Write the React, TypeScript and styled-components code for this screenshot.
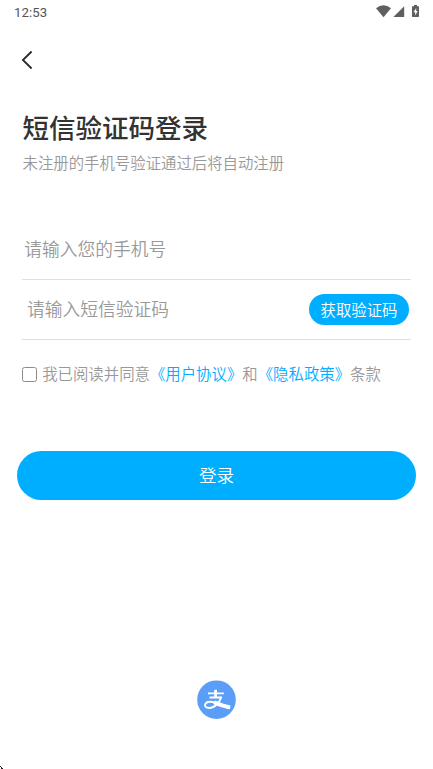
import React from 'react';
import styled, { createGlobalStyle } from 'styled-components';

const GlobalStyle = createGlobalStyle`
  * { box-sizing: border-box; }
  body {
    margin: 0;
    background: #fff;
    font-family: "Noto Sans CJK SC", sans-serif;
    font-weight: 350;
  }
`;

const Screen = styled.main`
  display: flex;
  flex-direction: column;
  height: 769px;
  overflow: hidden;
  background: #fff;
`;

const StatusBar = styled.header`
  display: flex;
  justify-content: space-between;
  height: 24px;
  padding: 0 13px 0 14px;
`;

const Clock = styled.time`
  font: 400 13.2px/25px Roboto, sans-serif;
  color: #555;
  letter-spacing: 0.1px;
`;

const StatusIcons = styled.svg`
  width: 46px;
  height: 24px;
  fill: #5f5f5f;
`;

const NavBar = styled.nav`
  display: flex;
  align-items: center;
  height: 72px;
  padding-left: 20px;
`;

const BackButton = styled.button`
  display: flex;
  padding: 0;
  border: 0;
  background: none;
`;

const Intro = styled.section`
  padding: 11px 22px 0 22.5px;
`;

const Title = styled.h1`
  margin: 0;
  font-size: 26.5px;
  font-weight: 500;
  line-height: 40px;
  color: #333;
`;

const Subtitle = styled.p`
  margin: 0;
  font-size: 15.4px;
  line-height: 30px;
  color: #999;
`;

const Form = styled.form`
  display: flex;
  flex-direction: column;
  margin-top: 43px;
`;

const Field = styled.div<{ $indent: number }>`
  display: flex;
  align-items: center;
  justify-content: space-between;
  height: 60px;
  margin: 0 22px;
  padding: 0 2px 0 ${({ $indent }) => $indent}px;
  border-bottom: 1px solid #dfdfdf;
`;

const Input = styled.input`
  flex: 1;
  min-width: 0;
  height: 40px;
  padding: 0 0 4px;
  border: 0;
  outline: 0;
  background: none;
  font: 350 17.75px/36px "Noto Sans CJK SC", sans-serif;
  color: #333;
  &::placeholder { color: #999; opacity: 1; }
`;

const CodeButton = styled.button`
  width: 100px;
  height: 31px;
  padding: 0 0 1px;
  border: 0;
  border-radius: 16px;
  background: #00aeff;
  color: #fff;
  font: 350 15.4px/30px "Noto Sans CJK SC", sans-serif;
`;

const Agreement = styled.label`
  display: flex;
  align-items: center;
  height: 30px;
  margin: 19px 22px 0;
  font-size: 15.4px;
  line-height: 28px;
  color: #999;
  white-space: nowrap;
`;

const Terms = styled.span`
  padding-bottom: 2px;
`;

const Checkbox = styled.input`
  appearance: none;
  width: 15px;
  height: 15px;
  margin: 0 5.2px 0 0;
  border: 1px solid #8c8c8c;
  border-radius: 2.5px;
  background: #fff;
  &:checked { background: #00aeff; }
`;

const Policy = styled.span`
  color: #00aeff;
`;

const LoginButton = styled.button`
  height: 49px;
  margin: 62px 17px 0;
  padding: 0 0 1px;
  border: 0;
  border-radius: 25px;
  background: #00aeff;
  color: #fff;
  font: 350 17.6px/48px "Noto Sans CJK SC", sans-serif;
`;

const Alternatives = styled.footer`
  display: flex;
  justify-content: center;
  margin-top: auto;
  padding-bottom: 50px;
`;

const CornerMark = styled.svg`
  position: absolute;
  left: 0;
  top: 766px;
`;

export default function App() {
  return (
    <Screen>
      <GlobalStyle />
      <StatusBar>
        <Clock>12:53</Clock>
        <StatusIcons viewBox="0 0 46 24" aria-hidden="true">
          <path d="M2 8.2Q9.5 2.5 17 8.2L9.5 17.3Z" />
          <path d="M30.2 6.2V17H19.4Z" />
          <path
            fillRule="evenodd"
            d="M38.3 6.3H40V5h3v1.3H44.7Q45 6.3 45 7V16.3Q45 17 44.3 17H38.7Q38 17 38 16.3V7Q38 6.3 38.3 6.3ZM42.2 8L39.5 12.3H41.2V15.5L43.7 11.1H42.2Z"
          />
        </StatusIcons>
      </StatusBar>
      <NavBar>
        <BackButton aria-label="返回">
          <svg width="14" height="20" viewBox="0 0 14 20" fill="none" stroke="#292929" strokeWidth="1.8">
            <path d="M11.6 1.5L2.9 10l8.7 8.5" />
          </svg>
        </BackButton>
      </NavBar>
      <Intro>
        <Title>短信验证码登录</Title>
        <Subtitle>未注册的手机号验证通过后将自动注册</Subtitle>
      </Intro>
      <Form>
        <Field $indent={2.2}>
          <Input type="tel" placeholder="请输入您的手机号" />
        </Field>
        <Field $indent={5}>
          <Input placeholder="请输入短信验证码" />
          <CodeButton type="button">获取验证码</CodeButton>
        </Field>
        <Agreement>
          <Checkbox type="checkbox" />
          <Terms>
            我已阅读并同意<Policy>《用户协议》</Policy>和<Policy>《隐私政策》</Policy>条款
          </Terms>
        </Agreement>
        <LoginButton type="button">登录</LoginButton>
      </Form>
      <Alternatives>
        <svg width="39" height="39" viewBox="0 0 39 39" aria-label="支付宝">
          <circle cx="19.5" cy="19.7" r="19.3" fill="#5b9ef8" />
          <g fill="none" stroke="#fff">
            <path strokeWidth="2.8" d="M18.6 9.8V17.5" />
            <path strokeWidth="1.8" d="M11 13.3H26.8M12.5 17.5H25" />
            <path strokeWidth="2" d="M24.3 17C22.5 22.5 17.5 28 12.5 28C8.5 28 7 25.7 8.6 23.5C10.2 21.3 14.5 21.3 18 22.8" />
            <path strokeWidth="3.8" d="M17 22.3C22 24.3 27 26.5 33.2 27.3" />
          </g>
        </svg>
      </Alternatives>
      <CornerMark width="3" height="3" aria-hidden="true">
        <path d="M0 0h1v1h1v1h1v1H1V1H0Z" fill="#222" />
      </CornerMark>
    </Screen>
  );
}
